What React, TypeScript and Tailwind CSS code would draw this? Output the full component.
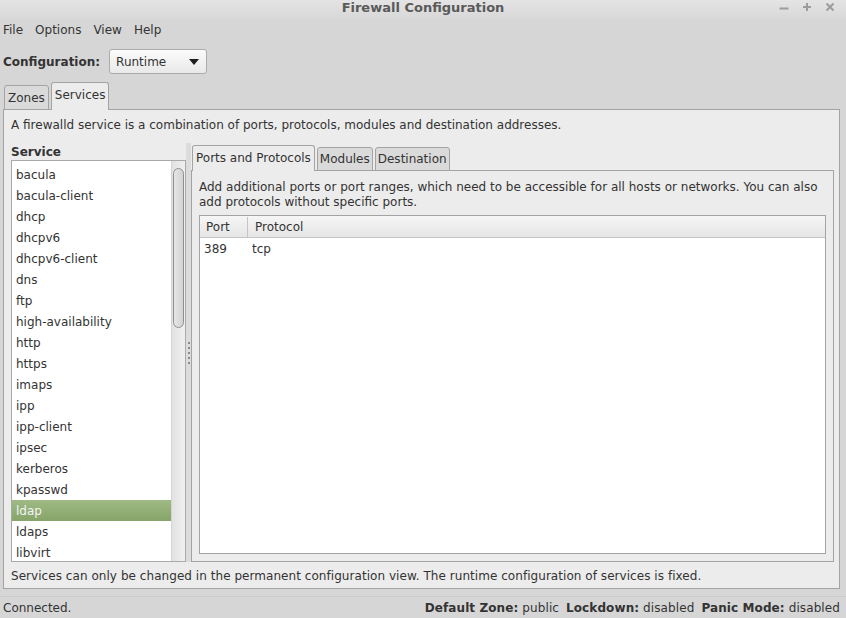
import React from 'react';

const services = [
  'bacula',
  'bacula-client',
  'dhcp',
  'dhcpv6',
  'dhcpv6-client',
  'dns',
  'ftp',
  'high-availability',
  'http',
  'https',
  'imaps',
  'ipp',
  'ipp-client',
  'ipsec',
  'kerberos',
  'kpasswd',
  'ldap',
  'ldaps',
  'libvirt',
];

function WindowControls() {
  return (
    <div className="absolute right-[11px] top-[2px] flex items-center gap-[13px] text-[#9c9c9c]">
      <svg width="10" height="10" viewBox="0 0 10 10">
        <path d="M0.5 6.5h9" stroke="currentColor" strokeWidth="2" />
      </svg>
      <svg width="10" height="10" viewBox="0 0 10 10">
        <path d="M5 1v8M1 5h8" stroke="currentColor" strokeWidth="2" />
      </svg>
      <svg width="10" height="10" viewBox="0 0 10 10">
        <path d="M1.5 1.5l7 7M8.5 1.5l-7 7" stroke="currentColor" strokeWidth="2" />
      </svg>
    </div>
  );
}

function ServiceList() {
  return (
    <div className="flex min-h-0 flex-1 overflow-hidden border border-[#a9a9a9] bg-white">
      <div className="flex-1 overflow-hidden pt-[3px]">
        {services.map((s) => (
          <div
            key={s}
            className={
              s === 'ldap'
                ? 'h-[21px] bg-linear-to-b from-[#9fba85] to-[#87a469] pl-[4px] pt-[1px] leading-[20px] text-[#f4f4f4]'
                : 'h-[21px] pl-[4px] pt-[1px] leading-[20px]'
            }
          >
            {s}
          </div>
        ))}
      </div>
      {/* scrollbar */}
      <div className="w-[14px] border-l border-[#d4d4d4] bg-linear-to-r from-[#e2e2e2] to-[#f0f0f0] px-[1px] pt-[7px]">
        <div className="h-[160px] rounded-full border border-[#8f8f8f] bg-linear-to-r from-[#e6e6e6] to-[#d2d2d2]" />
      </div>
    </div>
  );
}

function PaneHandle() {
  return (
    <div className="flex w-[5px] flex-col items-center justify-center gap-[3px] bg-[#dcdcdc]">
      {[0, 1, 2, 3, 4].map((i) => (
        <div key={i} className="h-[2px] w-[2px] bg-[#8a8a8a]" />
      ))}
    </div>
  );
}

function PortsPanel() {
  return (
    <div className="flex min-w-0 flex-1 flex-col pt-[2px]">
      <div className="relative z-10 -mb-px flex items-end gap-[2px] pl-[1px]">
        <div className="h-[26px] rounded-t-[3px] border border-b-0 border-[#a3a3a3] bg-[#ececec] px-[3px] pt-[5px] leading-[15px]">
          Ports and Protocols
        </div>
        <div className="h-[24px] rounded-t-[3px] border border-[#a3a3a3] bg-[#dadada] px-[2px] pt-[4px] leading-[15px]">
          Modules
        </div>
        <div className="h-[24px] rounded-t-[3px] border border-[#a3a3a3] bg-[#dadada] px-[2px] pt-[4px] leading-[15px]">
          Destination
        </div>
      </div>
      <div className="flex min-h-0 flex-1 flex-col border border-[#a3a3a3] bg-[#ececec] px-[7px] pb-[7px] pt-[9px]">
        <p className="leading-[15px]">
          Add additional ports or port ranges, which need to be accessible for all hosts or networks. You can also
          <br />
          add protocols without specific ports.
        </p>
        <div className="mt-[5px] flex min-h-0 flex-1 flex-col border border-[#a3a3a3] bg-white">
          <div className="flex h-[22px] border-b border-[#c4c4c4] bg-linear-to-b from-[#f6f6f6] to-[#e6e6e6] pt-[1px] leading-[20px]">
            <div className="w-[48px] border-r border-[#c4c4c4] pl-[6px]">Port</div>
            <div className="pl-[7px]">Protocol</div>
          </div>
          <div className="flex h-[21px] pt-[1px] leading-[20px]">
            <div className="w-[48px] pl-[4px]">389</div>
            <div className="pl-[4px]">tcp</div>
          </div>
        </div>
      </div>
    </div>
  );
}

export default function App() {
  return (
    <div className="flex h-[618px] w-[846px] flex-col overflow-hidden bg-[#d6d6d6] font-['DejaVu_Sans',sans-serif] text-[12px] text-[#333333]">
      {/* title bar */}
      <div className="relative h-[19px] bg-linear-to-b from-[#e4e4e4] to-[#d8d8d8] text-center text-[13px] font-bold leading-[15px] text-[#5a5a5a]">
        Firewall Configuration
        <WindowControls />
      </div>

      {/* menu */}
      <div className="flex h-[21px] items-center gap-[12px] px-[3px]">
        <span>File</span>
        <span>Options</span>
        <span>View</span>
        <span>Help</span>
      </div>

      {/* configuration */}
      <div className="mt-[9px] flex h-[25px] items-center gap-[9px] px-[3px]">
        <span className="pt-[1px] font-bold">Configuration:</span>
        <div className="flex h-[25px] w-[98px] items-center justify-between rounded-[3px] border border-[#ababab] bg-linear-to-b from-[#fbfbfb] to-[#e9e9e9] pl-[6px] pr-[7px] pt-[1px]">
          <span>Runtime</span>
          <svg width="10" height="6" viewBox="0 0 10 6">
            <path d="M0 0h10L5 6z" fill="#1e1e1e" />
          </svg>
        </div>
      </div>

      {/* outer notebook */}
      <div className="mt-[8px] flex flex-col pl-[3px] pr-[6px]">
        <div className="relative z-10 -mb-px flex items-end gap-[2px] pl-[1px]">
          <div className="h-[25px] rounded-t-[3px] border border-[#a3a3a3] bg-[#dadada] px-[3px] pt-[5px] leading-[15px]">
            Zones
          </div>
          <div className="h-[28px] rounded-t-[3px] border border-b-0 border-[#a3a3a3] bg-[#ececec] px-[3px] pt-[5px] leading-[15px]">
            Services
          </div>
        </div>
        <div className="flex h-[480px] flex-col border border-[#a3a3a3] bg-[#ececec] pl-[7px] pr-[5px] pt-[7px]">
          <p className="h-[16px] leading-[16px]">
            A firewalld service is a combination of ports, protocols, modules and destination addresses.
          </p>
          <div className="mt-[10px] flex min-h-0 flex-1">
            <div className="flex w-[175px] flex-col">
              <div className="h-[17px] pt-[1px] font-bold leading-[16px]">Service</div>
              <ServiceList />
            </div>
            <PaneHandle />
            <PortsPanel />
          </div>
          <p className="mb-[4px] mt-[6px] h-[16px] leading-[16px] tracking-[0.05px]">
            Services can only be changed in the permanent configuration view. The runtime configuration of services is fixed.
          </p>
        </div>
      </div>

      {/* status bar */}
      <div className="mt-[7px] flex flex-1 items-center justify-between border-t border-[#cbcbcb] pl-[3px] pr-[6px] pt-[1px]">
        <span>Connected.</span>
        <div className="flex gap-[7px] tracking-[0.1px]">
          <span>
            <b>Default Zone:</b> public
          </span>
          <span>
            <b>Lockdown:</b> disabled
          </span>
          <span>
            <b>Panic Mode:</b> disabled
          </span>
        </div>
      </div>
    </div>
  );
}
